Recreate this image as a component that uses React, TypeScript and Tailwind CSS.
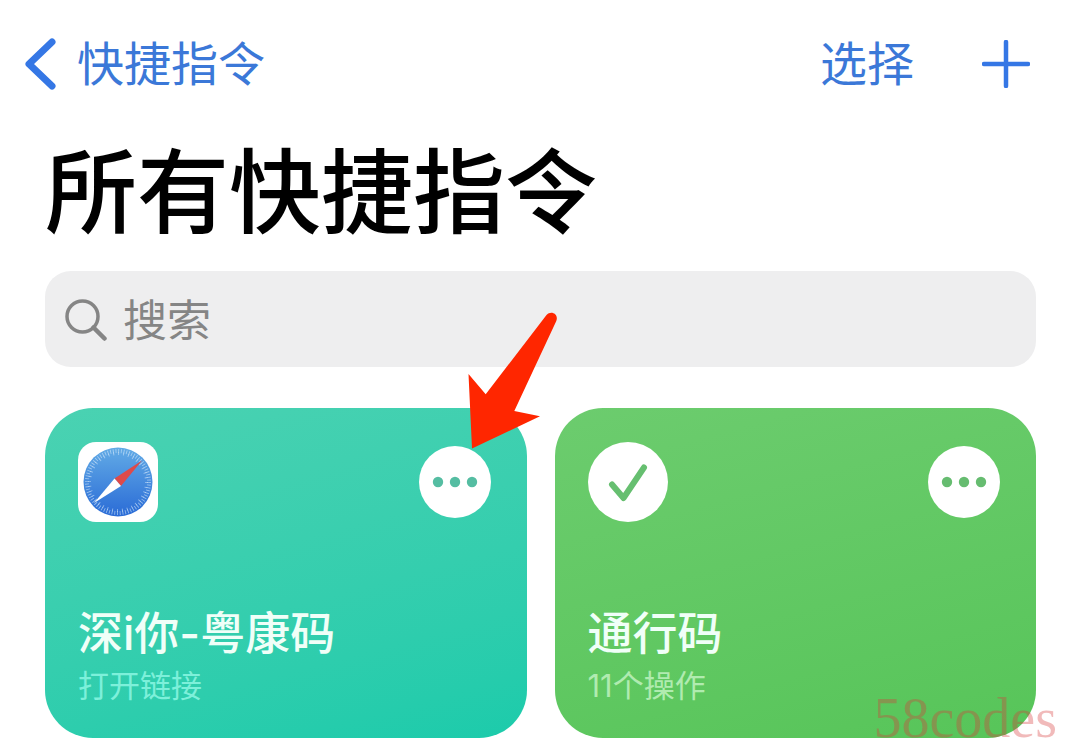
import type { ReactNode } from 'react';

type Shortcut = {
    title: string;
    subtitle: string;
    icon: ReactNode;
    background: string;
    subtitleColor: string;
    dotsColor: string;
    highlighted?: boolean;
};

// Safari style compass
function CompassIcon() {
    return (
        <svg className="size-20" viewBox="0 0 80 80" aria-hidden="true">
            <defs>
                <linearGradient id="compass" x1="0" y1="0" x2="0" y2="1">
                    <stop offset="0" stopColor="#62abe6" />
                    <stop offset="1" stopColor="#2a6bd6" />
                </linearGradient>
            </defs>
            <rect width="80" height="80" rx="18" fill="#fff" />
            <circle cx="40" cy="40" r="34.5" fill="url(#compass)" />
            <circle cx="40" cy="40" r="31" fill="none" stroke="#d3e7fa" strokeWidth="4" strokeDasharray="0.9 1.805" opacity="0.6" />
            <circle cx="40" cy="40" r="28.5" fill="none" stroke="#d3e7fa" strokeWidth="3" strokeDasharray="0.9 4.074" opacity="0.6" />
            <path d="M64 18.5 L36.5 36.5 L43 44 Z" fill="#de4a4a" />
            <path d="M16 61 L36.5 36.5 L43 44 Z" fill="#fff" />
        </svg>
    );
}

function CheckIcon() {
    return (
        <svg className="size-20" viewBox="0 0 80 80" aria-hidden="true">
            <circle cx="40" cy="40" r="40" fill="#fff" />
            <path d="M24 42.5 L35.5 56 L56 25.5" fill="none" stroke="#66bf70" strokeWidth="6" strokeLinecap="round" strokeLinejoin="round" />
        </svg>
    );
}

// Red arrow that points at the "more" button
function Arrow() {
    return (
        <svg className="pointer-events-none absolute bottom-[69px] left-[49px] z-10 h-[137px] w-[89px]" viewBox="0 0 89 137" aria-hidden="true">
            <path d="M4 136.5 L0.5 62 L17.7 82.3 L78.5 3 C83 -2 91 2 88.3 9 L46.3 99 L72 104.3 Z" fill="#ff2600" />
        </svg>
    );
}

const shortcuts: Shortcut[] = [
    {
        title: "深i你-粤康码",
        subtitle: "打开链接",
        icon: <CompassIcon />,
        background: "bg-linear-165 from-[#4ad2b2] to-[#1bcbab]",
        subtitleColor: "text-[#7df0da]",
        dotsColor: "fill-[#55bda2]",
        highlighted: true,
    },
    {
        title: "通行码",
        subtitle: "11个操作",
        icon: <CheckIcon />,
        background: "bg-linear-165 from-[#6ccc6e] to-[#57c559]",
        subtitleColor: "text-[#b0ebb0]",
        dotsColor: "fill-[#66bc70]",
    },
];

function ShortcutCard({ shortcut }: { shortcut: Shortcut }) {
    return (
        <article className={`flex flex-1 flex-col justify-between rounded-[48px] px-[33px] pt-[34px] pb-[30px] ${shortcut.background}`}>
            <div className="flex items-center justify-between pr-[3px]">
                {shortcut.icon}
                <div className="relative">
                    <button type="button" aria-label="更多" className="block size-[72px] rounded-full bg-white">
                        <svg className={`size-[72px] ${shortcut.dotsColor}`} viewBox="0 0 72 72" aria-hidden="true">
                            <circle cx="19" cy="36" r="5.2" />
                            <circle cx="36" cy="36" r="5.2" />
                            <circle cx="53" cy="36" r="5.2" />
                        </svg>
                    </button>
                    {shortcut.highlighted && <Arrow />}
                </div>
            </div>
            <div className="mt-[82px]">
                <h2 className="text-[45px] leading-[60px] font-medium text-[#f0fff8]">{shortcut.title}</h2>
                <p className={`text-[31px] leading-[44px] ${shortcut.subtitleColor}`}>{shortcut.subtitle}</p>
            </div>
        </article>
    );
}

function App() {
    return (
        <div className="relative bg-white pt-7 pr-[37px] pb-3 pl-[45px] font-['Inter','Noto_Sans_CJK_SC',sans-serif]">
            <nav className="-ml-5 flex items-center justify-between text-[47px] leading-[72px] text-[#3b78d8]">
                <a href="#" className="flex items-center gap-5">
                    <svg className="h-[54px] w-8" viewBox="0 0 32 54" fill="none" aria-hidden="true">
                        <path d="M27 5 L4 27 L27 49" stroke="#3577e5" strokeWidth="7" strokeLinecap="round" strokeLinejoin="round" />
                    </svg>
                    快捷指令
                </a>
                <div className="flex items-center gap-[68px] pr-1.5">
                    <button type="button">选择</button>
                    <button type="button" aria-label="添加">
                        <svg className="size-12" viewBox="0 0 48 48" aria-hidden="true">
                            <path d="M24 2 V46 M2 24 H46" stroke="#3577e5" strokeWidth="4.5" strokeLinecap="round" />
                        </svg>
                    </button>
                </div>
            </nav>

            <h1 className="mt-[33px] text-[92px] leading-[120px] font-medium text-black">所有快捷指令</h1>

            <label className="mt-[18px] flex h-24 items-center gap-4 rounded-[26px] bg-[#eeeeef] px-5 pt-1 text-[44px] text-[#858585]">
                <svg className="h-[44px] w-[42px] shrink-0" viewBox="0 0 42 44" fill="none" stroke="#858585" aria-hidden="true">
                    <circle cx="17.5" cy="17.5" r="15.5" strokeWidth="3.5" />
                    <path d="M28.5 28.5 L39.5 39.5" strokeWidth="4.5" strokeLinecap="round" />
                </svg>
                <input type="text" aria-label="搜索" placeholder="搜索" className="w-full min-w-0 bg-transparent outline-none placeholder:text-[#858585]" />
            </label>

            <main className="mt-[41px] flex gap-7">
                {shortcuts.map((shortcut) => (
                    <ShortcutCard key={shortcut.title} shortcut={shortcut} />
                ))}
            </main>

            <span className="absolute right-4 bottom-0 font-['Liberation_Serif',serif] text-[56px] leading-[64px] text-[#d83a3a]/35">58codes</span>
        </div>
    );
}

export default App;
